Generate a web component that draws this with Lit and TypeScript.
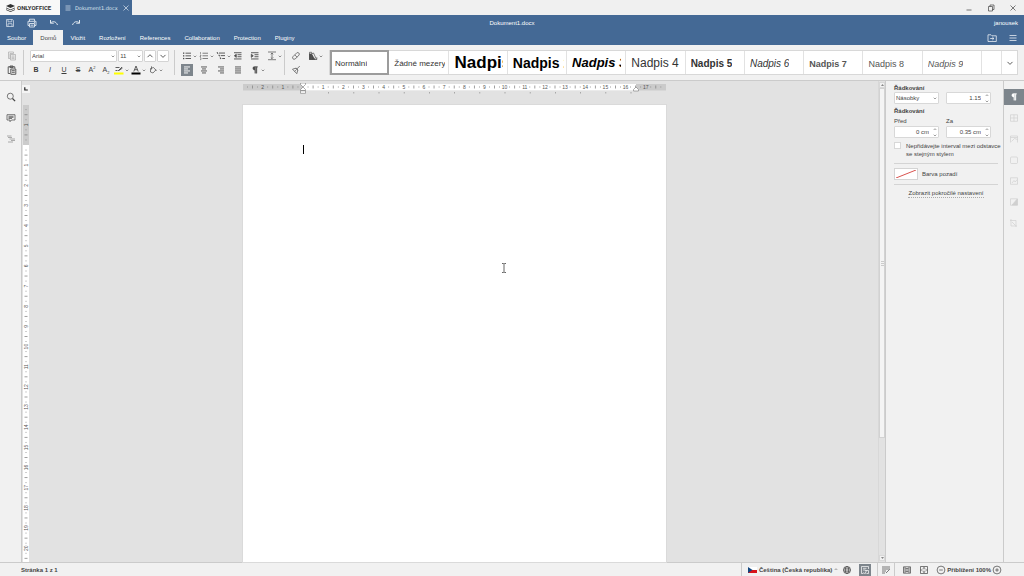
import { LitElement, html, svg, css, TemplateResult, SVGTemplateResult } from "lit";
import { customElement, property } from "lit/decorators.js";
import { classMap } from "lit/directives/class-map.js";

const bar = (x: number, y: number, w: number, h = 0.9) =>
  svg`<rect x=${x} y=${y} width=${w} height=${h} fill="currentColor"/>`;

const ICONS: Record<string, SVGTemplateResult> = {
  copy: svg`<path d="M2.500 2h5v1.500h-3.500v5h-1.500zM4.500 4.500h5v5.500h-5zM5.500 6h3M5.500 7.300h3M5.500 8.600h3"/>`,
  paste: svg`<path d="M4 9.500H2.200V2.800h6.600V4.500M4 2h3v1.600H4zM4.800 5h5v5.300h-5zM5.800 6.700h3M5.800 8.300h3" stroke-width="0.9"/>`,
  save: svg`<path d="M2.500 2.500h6l1 1v6h-7zM4 2.500v2.300h3.800V2.500M4 9.500V6.700h4v2.800"/>`,
  print: svg`<path d="M3.500 4.300V2.200h5v2.100M3.500 8.500H2V4.300h8v4.200H8.500M3.500 6.500h5v3.500h-5zM4.500 8.200h3M8 5.400h1" stroke-width="0.9"/>`,
  undo: svg`<path d="M2.500 3v3.200h3.300M2.700 6C4.500 4 8 4 9.500 8" stroke-width="1"/>`,
  redo: svg`<path d="M9.500 3v3.200H6.200M9.300 6C7.500 4 4 4 2.500 8" stroke-width="1"/>`,
  up: svg`<path d="M3.500 7.200L6 4.700l2.500 2.500" stroke-width="0.9"/>`,
  down: svg`<path d="M3.500 4.900L6 7.400l2.500-2.500" stroke-width="0.9"/>`,
  marker: svg`<rect x="1" y="8.500" width="9.500" height="2" fill="#ff0" stroke="none"/><path d="M2.500 3.500h4M2.500 6.500h2M5 7l4-4M6 6.500l3.500-2.500" stroke-width="0.9"/>`,
  fontcolor: svg`<rect x="1.500" y="8.500" width="9" height="2" fill="#000" stroke="none"/><path d="M3.800 7.500L6 2l2.200 5.500M4.600 5.700h2.800" stroke-width="0.9"/>`,
  fill: svg`<path d="M3.500 4.500L6.500 3.500 8.800 6 6 9 3.500 8zM4.500 2.300v3.200M8.800 5.500l.5 1.500"/>`,
  bullets: svg`${bar(2, 2.5, 1.3, 1.3)}${bar(2, 5.2, 1.3, 1.3)}${bar(2, 7.9, 1.3, 1.3)}${bar(4.5, 2.7, 5.5)}${bar(4.5, 5.4, 5.5)}${bar(4.5, 8.1, 5.5)}`,
  numbers: svg`<path d="M2.500 2v2.200M2 5.200h1v.8H2v.8h1M2 7.800h1v1.800H2" stroke-width="0.500"/>${bar(4.5, 2.8, 5.5, 0.7)}${bar(4.5, 5.5, 5.5, 0.7)}${bar(4.5, 8.2, 5.5, 0.7)}`,
  levels: svg`<path d="M2 2.200l1 1.500M3.700 4.700l1 1.500M5 7.500l1 1.500" stroke-width="1.100"/>${bar(4, 2.6, 6)}${bar(5.7, 5.2, 4.3)}${bar(7.2, 8, 2.8)}`,
  outdent: svg`${bar(2, 2.3, 7.5)}${bar(5.5, 4.3, 4)}${bar(5.5, 6.3, 4)}${bar(2, 8.5, 7.5)}<path d="M4.300 4.200L2.300 5.800l2 1.600z" fill="currentColor"/>`,
  indent: svg`${bar(2, 2.3, 7.5)}${bar(5.5, 4.3, 4)}${bar(5.5, 6.3, 4)}${bar(2, 8.5, 7.5)}<path d="M2.300 4.200l2 1.600-2 1.600z" fill="currentColor"/>`,
  spacing: svg`<path d="M2 2h8M2 9.700h8M6 3.200v5.300M4.800 4.300L6 3l1.200 1.300M4.800 7.500L6 8.700l1.200-1.200"/>`,
  left: svg`${bar(3, 2.5, 6)}${bar(3, 4.5, 4)}${bar(3, 6.5, 6)}${bar(3, 8.5, 4)}`,
  center: svg`${bar(3, 2.5, 6)}${bar(4, 4.5, 4)}${bar(3, 6.5, 6)}${bar(4, 8.5, 4)}`,
  right: svg`${bar(3, 2.5, 6)}${bar(5, 4.5, 4)}${bar(3, 6.5, 6)}${bar(5, 8.5, 4)}`,
  justify: svg`${bar(3, 2.5, 6)}${bar(3, 4.5, 6)}${bar(3, 6.5, 6)}${bar(3, 8.5, 6)}`,
  pilcrow: svg`<path d="M5.500 2.500h3v.8H8v6h-.8v-6h-.6v6h-.8V6.200C3.200 6.200 3.200 2.500 5.500 2.500z" fill="currentColor" stroke-width="0.300"/>`,
  eraser: svg`<path d="M2.800 6.800L6.800 2.800c1.500-1 3.200.8 2.300 2.200L5.200 9C3.500 10 1.800 8.300 2.800 6.800zM4.800 4.900l2.300 2.300"/>`,
  brush: svg`<path d="M9.800 2L7.300 4.500M2.500 5.200l3-.9 2.200 2.200-.9 3.200zM7.300 4.500L5.500 4.300M7.300 4.500l.4 2M4.500 7.300l1.500-1"/>`,
  scheme: svg`<path d="M2.500 2.300h2.200v7.200H2.500zM4.700 4l1.800-1 3 6.500M4.700 9.500h5.100V7.300" /><path d="M2.500 4h2.200v5.500H2.500zM5 5l3 4.500H5z" fill="currentColor"/>`,
  search: svg`<circle cx="5.300" cy="5.200" r="3"/><path d="M7.500 7.500l2.600 2.600" stroke-width="1.300"/>`,
  comment: svg`<path d="M2 2.700h8v5.300H6.500L5 9.700V8H2zM3.500 4.300h5M3.500 5.400h5M3.500 6.500h3.500"/>`,
  outline: svg`<path d="M2 3h4.500M4.500 6h5.500M3 9h5M3 4.500h4M6 7.500h4" stroke-width="0.8"/>`,
  globe: svg`<circle cx="6" cy="6" r="3.600"/><ellipse cx="6" cy="6" rx="1.700" ry="3.600"/><path d="M2.500 6h7M3 4.200h6M3 7.800h6"/>`,
  spell: svg`<path d="M9.500 5V2.500h-7v7h2M4 4.300h3.500M4 6h2.500M4.500 8.300l1.500 1.500L7.500 6.500M6 6.500h3.500v3H7.500"/>`,
  track: svg`<path d="M2 3h8M2 5h8M2 7h4M2 9h3M6 9l3.500-3.500"/>`,
  fitpage: svg`<path d="M2.500 2.800h7v6.400h-7zM4 3v6M8 3v6M4.500 4.500h3M4.500 6h3M4.500 7.500h3"/>`,
  fitwidth: svg`<path d="M2.500 2.500h7v7h-7zM2.500 6h2M7.500 6h2M6 3.500v1.800M6 6.700v1.800M5 4.500l1-1 1 1M5 7.500l1 1 1-1"/>`,
  minus: svg`<circle cx="6" cy="6" r="3.900"/><path d="M4.200 6h3.600"/>`,
  plus: svg`<circle cx="6" cy="6" r="3.900"/><path d="M4.200 6h3.600M6 4.200v3.600"/>`,
  table: svg`<path d="M2.500 2.800h7v6.500h-7zM2.500 6h7M6 2.800v6.500"/>`,
  header: svg`<path d="M2.500 9.500V3h7v6.500M2.500 4.500h7M3.500 8.500l3-3 3 1"/>`,
  shape: svg`<rect x="2.500" y="3" width="7" height="6.500" rx="1"/>`,
  chart: svg`<path d="M2.500 2.800h7v6.500h-7zM4 8l2-2.500L7.200 7l2-2.500"/>`,
  art: svg`<path d="M2.500 2.800h7v6.500h-7z"/><path d="M9.200 3v6H4z" fill="currentColor"/>`,
  form: svg`<path d="M3 2v7h6M2 3.500h6v6.500M4 5l3.500 3.500"/>`,
  minimize: svg`<path d="M3.500 8h5"/>`,
  restore: svg`<path d="M3.500 4.500h4v4.500h-4zM5 4.500V3h4v4.500H7.500"/>`,
  close: svg`<path d="M3.500 3.500l5 5M8.500 3.500l-5 5"/>`,
  menu: svg`<path d="M2.500 3.500h7M2.500 6h7M2.500 8.500h7"/>`,
  lines: svg`<path d="M3.500 4h5M3.500 6h5M3.500 8h5"/>`,
  folder: svg`<path d="M2 2.800h3l1 1h4.300v5.700H2zM4.200 6.500h3.500M6.300 5l1.600 1.500L6.300 8"/>`,
  tabstop: svg`<path d="M4.200 3.500v4h4.500" stroke-width="1.800"/>`,
};

const icon = (name: string): TemplateResult =>
  html`<svg class="icon" viewBox="0 0 12 12" aria-hidden="true">${ICONS[name]}</svg>`;

const iconStyles = css`
  .icon {
    display: block;
    width: 12px;
    height: 12px;
    flex: none;
    fill: none;
    stroke: currentColor;
    stroke-width: 0.7;
  }
  .icon rect[fill="currentColor"] {
    stroke: none;
  }
  button {
    display: flex;
    align-items: center;
    justify-content: center;
    margin: 0;
    padding: 0;
    border: 0;
    background: none;
    color: inherit;
    font: inherit;
  }
`;

const CM = 20.16;

@customElement("doc-ruler")
class DocRuler extends LitElement {
  @property({ type: Number }) before = 0;
  @property({ type: Number }) after = 0;
  @property({ type: Number }) length = 0;
  @property({ type: Boolean }) vertical = false;

  private observer?: ResizeObserver;

  static styles = css`
    :host {
      display: block;
      overflow: hidden;
    }
    svg {
      display: block;
    }
    text {
      font: 5px "Liberation Sans", Arial, sans-serif;
      fill: #555;
      text-anchor: middle;
    }
    .handle {
      fill: #fff;
      stroke: #777;
      stroke-width: 0.6;
    }
  `;

  connectedCallback() {
    super.connectedCallback();
    if (this.vertical) {
      this.observer = new ResizeObserver(() => {
        this.length = this.clientHeight;
      });
      this.observer.observe(this);
    }
  }

  disconnectedCallback() {
    this.observer?.disconnect();
    super.disconnectedCallback();
  }

  private marks() {
    const out: SVGTemplateResult[] = [];
    const first = Math.ceil((-this.before / CM) * 4);
    const last = Math.floor(((this.length - this.before) / CM) * 4);
    for (let q = first; q <= last; q++) {
      const at = this.before + (q * CM) / 4;
      if (q === 0 || at < 3 || at > this.length - 3) continue;
      const label = Math.abs(q / 4);
      const size = q % 2 === 0 ? 3 : 1;
      if (q % 4 === 0) {
        out.push(
          this.vertical
            ? svg`<text transform="translate(5.800 ${at}) rotate(-90)">${label}</text>`
            : svg`<text x=${at} y="5.800">${label}</text>`
        );
      } else {
        out.push(
          this.vertical
            ? svg`<rect x=${4 - size / 2} y=${at - 0.4} width=${size} height="0.8" fill="#888"/>`
            : svg`<rect x=${at - 0.4} y=${4 - size / 2} width="0.8" height=${size} fill="#888"/>`
        );
      }
    }
    return out;
  }

  private handles() {
    const stops: SVGTemplateResult[] = [];
    for (let x = this.before + 25.2; x < this.after; x += 25.2) {
      stops.push(svg`<rect x=${x} y="9" width="0.8" height="1.500" fill="#999"/>`);
    }
    const l = this.before;
    const r = this.after;
    return svg`${stops}
      <path class="handle" d="M${l - 2.5} 0h5v1.500l-2.500 2.500-2.500-2.500zM${l - 2.5} 7.500v-1l2.500-2.500 2.500 2.500v1zM${l - 2.5} 7.800h5v2.500h-5z"/>
      <path class="handle" d="M${r - 2.5} 8v-1.500l2.500-2.500 2.500 2.500v1.500z"/>`;
  }

  render() {
    if (this.vertical) {
      return html`<svg width="8" height=${this.length}>
        <rect x="1" y="0" width="6" height=${this.before} fill="#cbcbcb"/>
        <rect x="1" y=${this.before} width="6" height=${Math.max(0, this.length - this.before)} fill="#fff"/>
        ${this.marks()}
      </svg>`;
    }
    return html`<svg width=${this.length} height="12">
      <rect x="0" y="1" width=${this.length} height="6.500" fill="#cbcbcb"/>
      <rect x=${this.before} y="1" width=${this.after - this.before} height="6.500" fill="#fff"/>
      ${this.marks()}${this.handles()}
    </svg>`;
  }
}

@customElement("editor-toolbar")
class EditorToolbar extends LitElement {
  static styles = [
    iconStyles,
    css`
      :host {
        display: flex;
        gap: 5px;
        height: 36px;
        box-sizing: border-box;
        padding: 5px 6px;
        background: #f1f1f1;
        border-bottom: 1px solid #cbcbcb;
        color: #4c4c4c;
      }
      .group {
        flex: none;
        display: flex;
        flex-direction: column;
        gap: 2px;
      }
      .clip {
        width: 12px;
      }
      .fonts {
        width: 140px;
      }
      .row {
        display: flex;
        height: 12px;
      }
      .fields {
        gap: 1px;
        padding-left: 1px;
      }
      .sep {
        flex: none;
        width: 1px;
        height: 25px;
        background: #cbcbcb;
      }
      .pick {
        position: relative;
        display: flex;
      }
      .pick.font {
        width: 88px;
      }
      .pick.size {
        width: 25px;
      }
      select {
        appearance: none;
        width: 100%;
        height: 12px;
        margin: 0;
        padding: 0 1px;
        border: 1px solid #d4d4d4;
        border-radius: 1px;
        background: #fff;
        color: #444;
        font: 6px "Liberation Sans", Arial, sans-serif;
      }
      .pick .chev {
        position: absolute;
        right: 2px;
        top: 5px;
      }
      .chev {
        width: 4px;
        height: 3px;
        fill: none;
        stroke: #666;
        stroke-width: 0.7;
        display: block;
      }
      .box {
        width: 12px;
        height: 12px;
        border: 1px solid #d4d4d4;
        background: #fff;
        border-radius: 1px;
      }
      .letter {
        width: 14px;
        height: 12px;
        font: 7px/12px "Liberation Sans", Arial, sans-serif;
        color: #3c3c3c;
      }
      .letter sup,
      .letter sub {
        font-size: 4px;
        line-height: 4px;
      }
      .split {
        display: flex;
        align-items: center;
        width: 17px;
      }
      .para {
        width: 99px;
        padding-left: 1px;
        box-sizing: border-box;
      }
      .para .row {
        display: grid;
        grid-template-columns: repeat(6, 1fr);
      }
      .tools {
        width: 34px;
      }
      .tools .row {
        gap: 5px;
      }
      .pressed {
        background: #7d858c;
        color: #fff;
      }
      .gallery {
        flex: 1;
        min-width: 0;
        height: 25px;
        box-sizing: border-box;
        display: grid;
        grid-template-columns: repeat(11, minmax(0, 1fr)) 20px 15px;
        border: 1px solid #d8d8d8;
        background: #fff;
      }
      .style {
        justify-content: flex-start;
        padding: 0 4px 0 5px;
        border-right: 1px solid #e2e2e2;
        overflow: hidden;
        white-space: nowrap;
        color: #333;
        font-family: "Liberation Sans", Arial, sans-serif;
      }
      .style span {
        overflow: hidden;
        line-height: 22px;
      }
      .normal {
        font-size: 8px;
        padding: 3px 1px 0 5px;
      }
      .chosen {
        margin: -1px 0;
        border: 2px solid #9c9c9c;
        padding-left: 3px;
      }
      .h1 { font-size: 17px; font-weight: bold; color: #000; padding-left: 6px; }
      .h2 { font-size: 14px; font-weight: bold; color: #000; padding-right: 2px; }
      .h3 { font-size: 13px; font-weight: bold; font-style: italic; color: #000; }
      .h4 { font-size: 12px; }
      .h5 { font-size: 10px; font-weight: bold; }
      .h6 { font-size: 10px; font-style: italic; }
      .h7 { font-size: 9px; font-weight: bold; color: #555; }
      .h8 { font-size: 9px; color: #555; }
      .h9 { font-size: 9px; font-style: italic; color: #555; }
      .small {
        padding-top: 2px;
      }
      .rest {
        border-right: 1px solid #e2e2e2;
      }
      .off {
        color: #aaa;
      }
    `,
  ];

  private chev() {
    return html`<svg class="chev" viewBox="0 0 4 3" aria-hidden="true"><path d="M.7.700L2 2 3.300.700"/></svg>`;
  }

  private tool(name: string, label: string, drop = false, cls = "") {
    return html`<div class="split">
      <button class=${cls} aria-label=${label}>${icon(name)}</button>
      ${drop ? html`<button aria-label=${label + " – nabídka"}>${this.chev()}</button>` : ""}
    </div>`;
  }

  private styleCell(name: string, cls: string, chosen = false) {
    return html`<button class=${classMap({ style: true, chosen, [cls]: true, small: /h[56789]/.test(cls) })}>
      <span>${name}</span>
    </button>`;
  }

  render() {
    return html`
      <div class="group clip">
        <button class="off" aria-label="Kopírovat">${icon("copy")}</button>
        <button aria-label="Vložit">${icon("paste")}</button>
      </div>
      <div class="sep"></div>
      <div class="group fonts">
        <div class="row fields">
          <div class="pick font"><select aria-label="Písmo"><option>Arial</option></select>${this.chev()}</div>
          <div class="pick size"><select aria-label="Velikost písma"><option>11</option></select>${this.chev()}</div>
          <button class="box" aria-label="Zvětšit písmo">${icon("up")}</button>
          <button class="box" aria-label="Zmenšit písmo">${icon("down")}</button>
        </div>
        <div class="row">
          <button class="letter" aria-label="Tučné"><b>B</b></button>
          <button class="letter" aria-label="Kurzíva"><i>I</i></button>
          <button class="letter" aria-label="Podtržené"><u>U</u></button>
          <button class="letter" aria-label="Přeškrtnuté"><s>S</s></button>
          <button class="letter" aria-label="Horní index"><span>A<sup>2</sup></span></button>
          <button class="letter" aria-label="Dolní index"><span>A<sub>2</sub></span></button>
          ${this.tool("marker", "Barva zvýraznění", true)}
          ${this.tool("fontcolor", "Barva písma", true)}
          ${this.tool("fill", "Stínování", true)}
        </div>
      </div>
      <div class="sep"></div>
      <div class="group para">
        <div class="row">
          ${this.tool("bullets", "Odrážky", true)} ${this.tool("numbers", "Číslování", true)}
          ${this.tool("levels", "Víceúrovňový seznam", true)} ${this.tool("outdent", "Zmenšit odsazení")}
          ${this.tool("indent", "Zvětšit odsazení")} ${this.tool("spacing", "Řádkování", true)}
        </div>
        <div class="row">
          ${this.tool("left", "Vlevo", false, "pressed")} ${this.tool("center", "Na střed")}
          ${this.tool("right", "Vpravo")} ${this.tool("justify", "Do bloku")}
          ${this.tool("pilcrow", "Netisknutelné znaky", true)}
        </div>
      </div>
      <div class="sep"></div>
      <div class="group tools">
        <div class="row">
          <button aria-label="Vymazat styl">${icon("eraser")}</button>
          ${this.tool("scheme", "Barevné schéma", true)}
        </div>
        <div class="row"><button aria-label="Kopírovat styl">${icon("brush")}</button></div>
      </div>
      <div class="gallery">
        ${this.styleCell("Normální", "normal", true)} ${this.styleCell("Žádné mezery", "normal")}
        ${this.styleCell("Nadpis 1", "h1")} ${this.styleCell("Nadpis 2", "h2")}
        ${this.styleCell("Nadpis 3", "h3")} ${this.styleCell("Nadpis 4", "h4")}
        ${this.styleCell("Nadpis 5", "h5")} ${this.styleCell("Nadpis 6", "h6")}
        ${this.styleCell("Nadpis 7", "h7")} ${this.styleCell("Nadpis 8", "h8")}
        ${this.styleCell("Nadpis 9", "h9")}
        <div class="rest"></div>
        <button aria-label="Další styly">${icon("down")}</button>
      </div>
    `;
  }
}

@customElement("paragraph-panel")
class ParagraphPanel extends LitElement {
  static styles = [
    iconStyles,
    css`
      :host {
        display: block;
        box-sizing: border-box;
        padding: 4px 5px 0 8px;
        background: #f1f1f1;
        border-left: 1px solid #cbcbcb;
        font: 6px/8px "Liberation Sans", Arial, sans-serif;
        color: #444;
      }
      h2 {
        margin: 0;
        font-size: 6px;
        line-height: 7px;
      }
      .pair {
        display: grid;
        grid-template-columns: 45px 45px;
        column-gap: 7px;
        margin-bottom: 4px;
      }
      .labels {
        margin: 2px 0 1px;
      }
      .field {
        position: relative;
        display: flex;
      }
      select,
      .field input {
        appearance: none;
        box-sizing: border-box;
        width: 100%;
        height: 12px;
        margin: 0;
        padding: 0 1px;
        border: 1px solid #d8d8d8;
        border-radius: 1px;
        background: #fff;
        color: #444;
        font: inherit;
      }
      .field input {
        text-align: right;
        padding-right: 9px;
      }
      .spin {
        position: absolute;
        right: 2px;
        top: 1px;
        display: grid;
        gap: 2px;
      }
      .spin button {
        width: 4px;
        height: 4px;
      }
      .chev {
        width: 4px;
        height: 3px;
        fill: none;
        stroke: #777;
        stroke-width: 0.7;
        display: block;
      }
      .field > .chev {
        position: absolute;
        right: 2px;
        top: 5px;
      }
      .check {
        display: flex;
        gap: 5px;
        margin: 0 -4px 5px 0;
      }
      .check input {
        appearance: none;
        flex: none;
        width: 7px;
        height: 7px;
        margin: 0;
        border: 1px solid #d8d8d8;
        background: #fff;
      }
      .rule {
        height: 1px;
        background: #d4d4d4;
      }
      .color {
        display: flex;
        align-items: center;
        gap: 4px;
        height: 20px;
      }
      .swatch {
        width: 24px;
        height: 12px;
        border: 1px solid #d4d4d4;
        background: #fff;
      }
      .swatch svg {
        display: block;
        width: 20px;
        height: 8px;
        stroke: #d9534f;
        stroke-width: 1;
      }
      .more {
        display: flex;
        justify-content: center;
        padding-top: 5px;
      }
      .more a {
        color: #444;
        text-decoration: none;
        border-bottom: 1px dotted #aaa;
        line-height: 7px;
      }
    `,
  ];

  private chev(up = false) {
    return html`<svg class="chev" viewBox="0 0 4 3" aria-hidden="true">
      <path d=${up ? "M.7 2L2 .7 3.300 2" : "M.7.700L2 2 3.300.700"} />
    </svg>`;
  }

  private spinner(id: string, value: string, label: string) {
    return html`<div class="field">
      <input id=${id} .value=${value} aria-label=${label} />
      <div class="spin">
        <button aria-label="Zvýšit">${this.chev(true)}</button>
        <button aria-label="Snížit">${this.chev()}</button>
      </div>
    </div>`;
  }

  render() {
    return html`
      <h2>Řádkování</h2>
      <div class="pair">
        <div class="field"><select aria-label="Řádkování"><option>Násobky</option></select>${this.chev()}</div>
        ${this.spinner("line", "1.15", "Hodnota řádkování")}
      </div>
      <h2>Řádkování</h2>
      <div class="pair labels"><label for="before">Před</label><label for="after">Za</label></div>
      <div class="pair">${this.spinner("before", "0 cm", "Před")} ${this.spinner("after", "0.35 cm", "Za")}</div>
      <label class="check">
        <input type="checkbox" />
        <span>Nepřidávejte interval mezi odstavce se stejným stylem</span>
      </label>
      <div class="rule"></div>
      <div class="color">
        <button class="swatch" id="bg" aria-label="Barva pozadí">
          <svg viewBox="0 0 20 8"><path d="M0 8L20 0" /></svg>
        </button>
        <label for="bg">Barva pozadí</label>
      </div>
      <div class="rule"></div>
      <div class="more"><a href="#">Zobrazit pokročilé nastavení</a></div>
    `;
  }
}

@customElement("app-root")
class AppRoot extends LitElement {
  static styles = [
    iconStyles,
    css`
      :host {
        display: flex;
        flex-direction: column;
        height: 100vh;
        overflow: hidden;
        background: #f1f1f1;
        font: 6px/8px "Liberation Sans", Arial, sans-serif;
        color: #444;
      }
      .title {
        display: flex;
        height: 15px;
        background: #f0f0f0;
      }
      .brand {
        display: flex;
        align-items: center;
        gap: 2px;
        width: 60px;
        box-sizing: border-box;
        padding-left: 6px;
        background: #f8f8f8;
        color: #333;
        font: bold 6px/8px Roboto, sans-serif;
      }
      .brand svg {
        width: 9px;
        height: 8px;
        fill: #333;
      }
      .doc {
        display: flex;
        align-items: center;
        width: 72px;
        box-sizing: border-box;
        padding-left: 2px;
        background: #446995;
        color: #dde6f0;
      }
      .doc span {
        flex: 1;
        padding-left: 1px;
        font-size: 5px;
        font-family: "DejaVu Sans", sans-serif;
      }
      .window {
        display: flex;
        gap: 10px;
        margin-left: auto;
        padding-right: 5px;
        color: #444;
      }
      .head {
        display: grid;
        grid-template-columns: 1fr auto 1fr;
        align-items: center;
        height: 15px;
        background: #446995;
        color: #fff;
      }
      .quick {
        display: flex;
        gap: 10px;
        padding-left: 4px;
        color: #dfe7ef;
      }
      .user {
        justify-self: end;
        padding-right: 6px;
      }
      nav {
        display: flex;
        height: 15px;
        background: #446995;
        color: #fff;
      }
      nav a {
        display: flex;
        align-items: center;
        padding: 0 7px;
        color: inherit;
        text-decoration: none;
      }
      nav a.active {
        background: #f1f1f1;
        color: #444;
      }
      nav .end {
        display: flex;
        gap: 9px;
        margin-left: auto;
        padding-right: 5px;
      }
      .main {
        flex: 1;
        min-height: 0;
        display: grid;
        grid-template-columns: 22px 1fr 118px 21px;
      }
      .rail {
        display: flex;
        flex-direction: column;
        align-items: center;
        gap: 9px;
        padding-top: 10px;
        border-right: 1px solid #cbcbcb;
      }
      .rail .dim {
        color: #999;
      }
      .work {
        min-width: 0;
        min-height: 0;
        display: grid;
        grid-template-columns: 8px 1fr 7px;
        background: #e2e2e2;
      }
      .side {
        display: flex;
        flex-direction: column;
        min-height: 0;
      }
      .side doc-ruler {
        flex: 1;
        min-height: 0;
      }
      .corner {
        flex: none;
        width: 8px;
        height: 8px;
        margin: 4px 0 12px;
        background: #f4f4f4;
        color: #222;
      }
      .corner .icon {
        width: 8px;
        height: 8px;
      }
      .canvas {
        position: relative;
        display: flex;
        flex-direction: column;
        align-items: center;
        min-height: 0;
        padding-top: 2px;
      }
      .canvas doc-ruler {
        height: 12px;
        margin-bottom: 10px;
      }
      .page {
        flex: 1;
        width: 423px;
        background: #fff;
        box-sizing: border-box;
        padding: 40px 60px 0;
        outline: 1px solid #dadada;
      }
      .caret {
        width: 1px;
        height: 9px;
        background: #000;
      }
      .pointer {
        position: absolute;
        left: 471px;
        top: 182px;
        width: 6px;
        height: 10px;
        fill: none;
        stroke: #666;
        stroke-width: 1;
      }
      .scroll {
        display: flex;
        flex-direction: column;
        padding: 1px 0;
        border-left: 1px solid #d8d8d8;
      }
      .scroll button {
        width: 6px;
        height: 6px;
        background: #f1f1f1;
        border: 1px solid #d8d8d8;
      }
      .scroll svg {
        width: 3px;
        height: 2px;
        fill: #888;
      }
      .track {
        flex: 1;
        display: grid;
        grid-template-rows: 3fr 1fr;
      }
      .thumb {
        display: grid;
        align-content: center;
        justify-content: center;
        gap: 1px;
        background: #f4f4f4;
        border: 1px solid #d2d2d2;
      }
      .thumb i {
        width: 3px;
        height: 1px;
        background: #cbcbcb;
      }
      .modes {
        display: flex;
        flex-direction: column;
        padding-top: 8px;
        gap: 5px;
        border-left: 1px solid #cbcbcb;
        color: #d0d0d0;
      }
      .modes button {
        height: 16px;
      }
      .modes .on {
        background: #7d858c;
        color: #fff;
      }
      .status {
        display: flex;
        align-items: center;
        height: 14px;
        box-sizing: border-box;
        border-top: 1px solid #cbcbcb;
        padding: 0 21px;
        font-weight: bold;
      }
      .tools {
        display: flex;
        align-items: center;
        margin-left: auto;
        height: 100%;
      }
      .lang {
        gap: 2px;
        height: 100%;
        padding: 0 3px 0 6px;
        border-left: 1px solid #cbcbcb;
        font-weight: bold;
      }
      .flag {
        width: 9px;
        height: 6px;
      }
      .tiny {
        width: 4px;
        height: 3px;
        fill: none;
        stroke: #777;
        stroke-width: 0.7;
      }
      .checks {
        display: flex;
        align-items: center;
        gap: 6px;
        padding-right: 6px;
      }
      .pressed {
        background: #7d858c;
        color: #fff;
      }
      .review {
        display: flex;
        align-items: center;
        height: 100%;
        padding: 0 2px;
        border: 1px solid #cbcbcb;
        border-width: 0 1px;
      }
      .fits {
        display: flex;
        gap: 5px;
        padding: 0 5px 0 6px;
      }
    `,
  ];

  render() {
    const modes = ["pilcrow", "table", "header", "shape", "chart", "art", "form"];
    const modeNames = ["Odstavec", "Tabulka", "Záhlaví", "Tvar", "Graf", "Text Art", "Formulář"];
    return html`
      <div class="title">
        <div class="brand">
          <svg viewBox="0 0 9 8" aria-hidden="true">
            <path d="M4.500 0L9 2 4.500 4 0 2zM0 3.500l4.500 2 4.500-2v.8l-4.500 2-4.500-2zM0 5.300l4.500 2 4.500-2v.7L4.500 8 0 6z" />
          </svg>
          ONLYOFFICE
        </div>
        <div class="doc">
          ${icon("lines")}<span>Dokument1.docx</span>
          <button aria-label="Zavřít dokument">${icon("close")}</button>
        </div>
        <div class="window">
          <button aria-label="Minimalizovat">${icon("minimize")}</button>
          <button aria-label="Obnovit">${icon("restore")}</button>
          <button aria-label="Zavřít">${icon("close")}</button>
        </div>
      </div>
      <header class="head">
        <div class="quick">
          <button aria-label="Uložit">${icon("save")}</button>
          <button aria-label="Tisk">${icon("print")}</button>
          <button aria-label="Zpět">${icon("undo")}</button>
          <button aria-label="Znovu">${icon("redo")}</button>
        </div>
        <div>Dokument1.docx</div>
        <div class="user">janousek</div>
      </header>
      <nav>
        ${["Soubor", "Domů", "Vložit", "Rozložení", "References", "Collaboration", "Protection", "Pluginy"].map(
          (t, i) => html`<a href="#" class=${classMap({ active: i === 1 })}>${t}</a>`
        )}
        <div class="end">
          <button aria-label="Otevřít umístění">${icon("folder")}</button>
          <button aria-label="Nastavení zobrazení">${icon("menu")}</button>
        </div>
      </nav>
      <editor-toolbar></editor-toolbar>
      <div class="main">
        <div class="rail">
          <button aria-label="Hledat">${icon("search")}</button>
          <button aria-label="Komentáře">${icon("comment")}</button>
          <button class="dim" aria-label="Nadpisy">${icon("outline")}</button>
        </div>
        <div class="work">
          <div class="side">
            <button class="corner" aria-label="Zarážka tabulátoru">${icon("tabstop")}</button>
            <doc-ruler vertical .before=${40}></doc-ruler>
          </div>
          <div class="canvas">
            <doc-ruler .before=${60} .after=${393} .length=${423}></doc-ruler>
            <div class="page"><div class="caret"></div></div>
            <svg class="pointer" viewBox="0 0 6 10" aria-hidden="true">
              <path d="M1 .500h1.500l.500.500.500-.500H5M3 1v8M1 9.500h1.500l.500-.500.500.500H5" />
            </svg>
          </div>
          <div class="scroll">
            <button aria-label="Posunout nahoru"><svg viewBox="0 0 3 2"><path d="M0 2L1.500 0 3 2z" /></svg></button>
            <div class="track"><div class="thumb"><i></i><i></i><i></i></div></div>
            <button aria-label="Posunout dolů"><svg viewBox="0 0 3 2"><path d="M0 0L1.500 2 3 0z" /></svg></button>
          </div>
        </div>
        <paragraph-panel></paragraph-panel>
        <div class="modes">
          ${modes.map((m, i) => html`<button class=${classMap({ on: i === 0 })} aria-label=${modeNames[i]}>${icon(m)}</button>`)}
        </div>
      </div>
      <footer class="status">
        <span>Stránka 1 z 1</span>
        <div class="tools">
          <button class="lang">
            <svg class="flag" viewBox="0 0 9 6" aria-hidden="true">
              <rect width="9" height="6" fill="#fff" /><rect y="3" width="9" height="3" fill="#d7141a" />
              <path d="M0 0l4.500 3L0 6z" fill="#11457e" />
            </svg>
            Čeština (Česká republika)
            <svg class="tiny" viewBox="0 0 4 3" aria-hidden="true"><path d="M.7 2L2 .7 3.300 2" /></svg>
          </button>
          <div class="checks">
            <button aria-label="Jazyk dokumentu">${icon("globe")}</button>
            <button class="pressed" aria-label="Kontrola pravopisu">${icon("spell")}</button>
          </div>
          <div class="review"><button aria-label="Sledovat změny">${icon("track")}</button></div>
          <div class="fits">
            <button aria-label="Přizpůsobit stránce">${icon("fitpage")}</button>
            <button aria-label="Přizpůsobit šířce">${icon("fitwidth")}</button>
          </div>
          <button aria-label="Oddálit">${icon("minus")}</button>
          <span>Přiblížení 100%</span>
          <button aria-label="Přiblížit">${icon("plus")}</button>
        </div>
      </footer>
    `;
  }
}
